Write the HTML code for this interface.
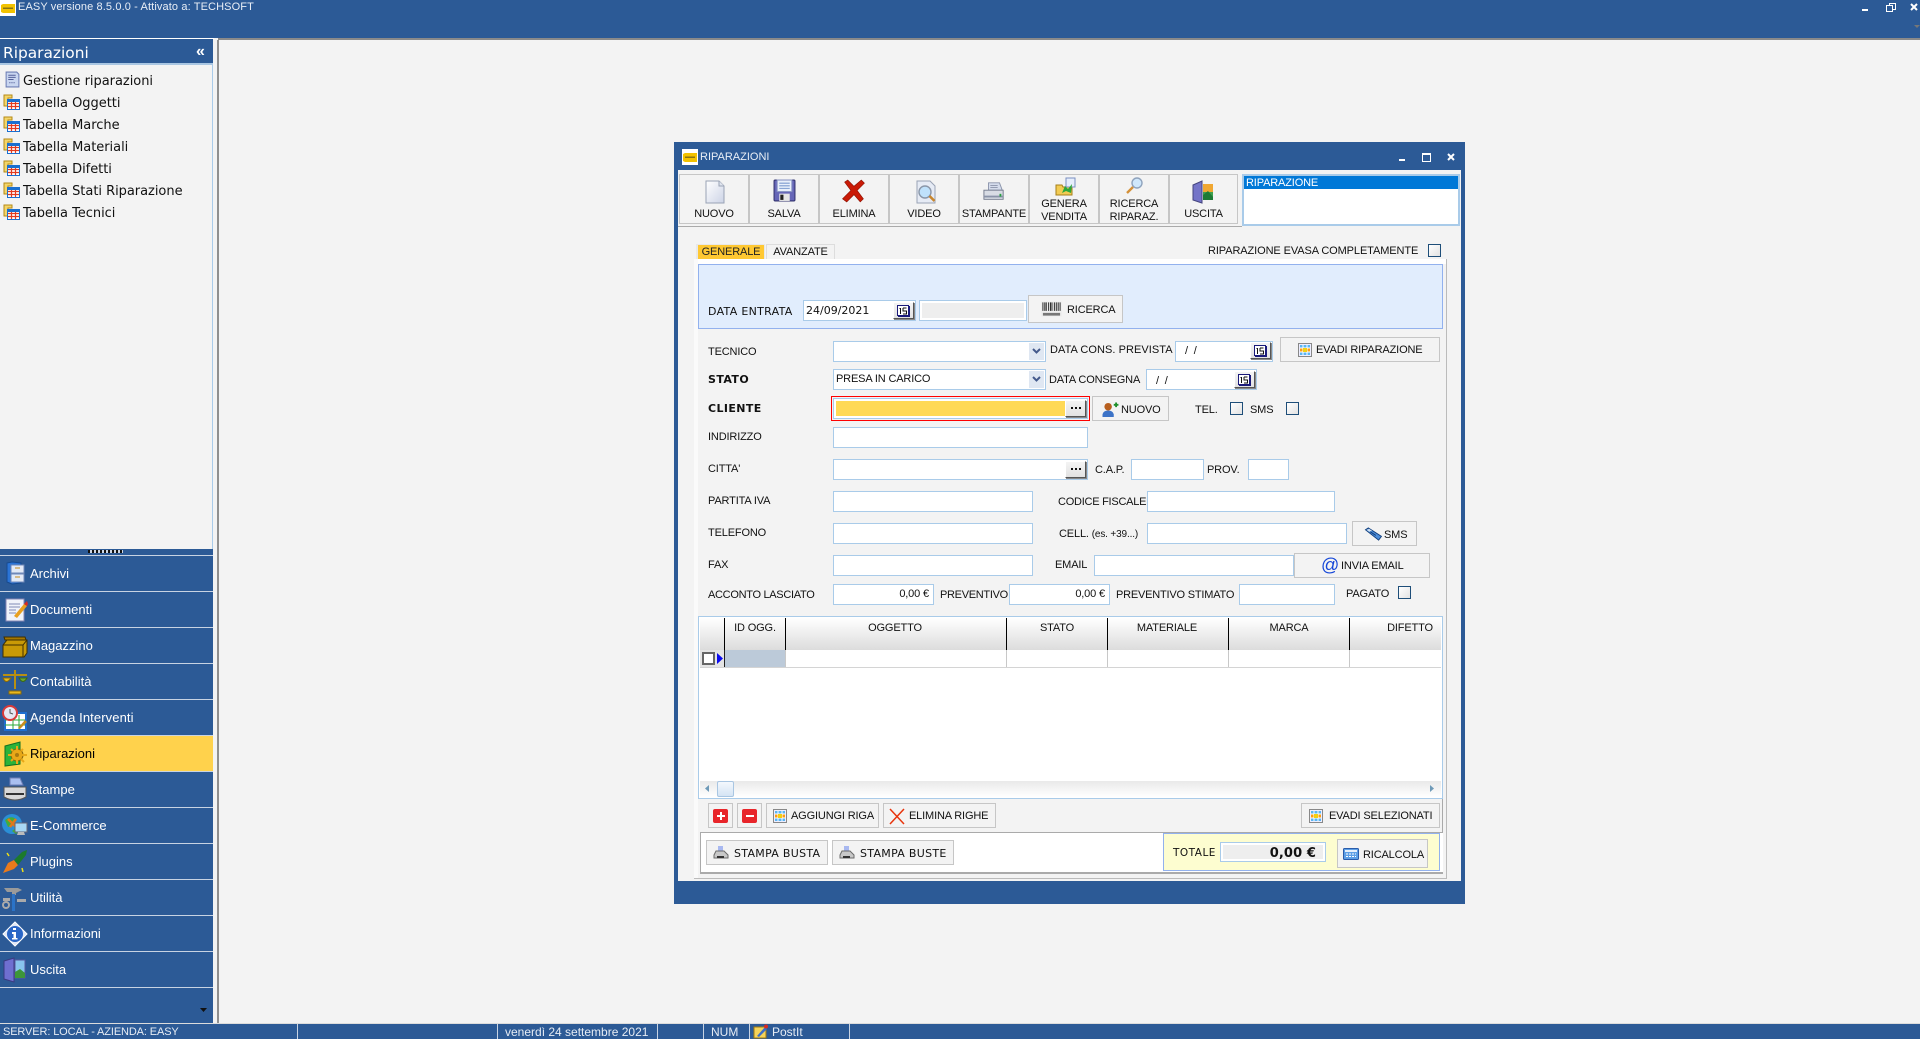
<!DOCTYPE html>
<html lang="it"><head><meta charset="utf-8"><title>EASY</title>
<style>
html,body{margin:0;padding:0;width:1920px;height:1039px;overflow:hidden;background:#f3f3f3;font-family:"Liberation Sans",sans-serif;font-size:11px;letter-spacing:-.15px;color:#111}
div,span,svg{position:absolute;box-sizing:border-box}
.t{white-space:nowrap;line-height:14px;height:14px;margin-top:1px}
.bl{font-family:"DejaVu Sans",sans-serif;font-weight:700;font-size:11px;letter-spacing:.4px}
.dj{font-family:"DejaVu Sans",sans-serif;font-size:11px;letter-spacing:.3px}
.i{background:#fff;border:1px solid #a9cbe9}
.b{background:#f3f3f3;border:1px solid #c6c6c6}
.tb{background:#f3f3f3;border:1px solid #c6c6c6;top:174px;height:50px;text-align:center;line-height:13px}
.tb span{left:0;right:0;text-align:center}
.cb{width:13px;height:13px;border:1px solid #1e4e79;background:linear-gradient(135deg,#fff,#e2e2e2)}
.m{left:0;width:213px;height:36px;border-top:1px solid #c8d3e3;background:#2c5a96;color:#fff;font-size:13px;letter-spacing:0}
.m span{left:30px;top:10px;white-space:nowrap;line-height:15px}
.m svg{left:2px;top:5px;width:26px;height:26px}
.s{font-family:"DejaVu Sans",sans-serif;font-size:13px;letter-spacing:-.03px;left:23px;white-space:nowrap;line-height:15px;color:#111;margin-top:1px}
.sb{top:1024px;height:15px;width:1px;background:#c8d3e3}
.st{top:1025px;color:#e6ecf4;font-size:12px;letter-spacing:0;line-height:14px;white-space:nowrap}
.h{top:621px;line-height:14px;white-space:nowrap;transform:translateX(-50%)}
.d{top:618px;width:1px;height:32px;background:#000}
.d2{top:650px;width:1px;height:17px;background:#c8c8c8}
.bt{background:linear-gradient(#f4f4f4,#e2e2e2);border:1px solid;border-color:#fff #555 #555 #fff;box-shadow:1px 1px 0 #888}
</style></head>
<body>
<svg width="0" height="0" style="position:absolute">
<defs>
<linearGradient id="gd" x1="0" y1="0" x2="1" y2="1"><stop offset="0" stop-color="#fff"/><stop offset="1" stop-color="#ccd3e6"/></linearGradient>
<symbol id="logo" viewBox="0 0 16 16"><rect width="16" height="16" fill="#fff"/><path d="M1 5l2-1h12v9H3l-2-1z" fill="#f2c200"/><rect x="3" y="7.500" width="10" height="1.500" fill="#8a7410"/></symbol>
<symbol id="doc" viewBox="0 0 16 16"><path d="M2 1h10l2 2v12H2z" fill="#c9d6f0" stroke="#6f7fb5"/><path d="M4 4h7M4 6h7M4 8h5" stroke="#55619a"/><path d="M5 11h1M7 11h1M9 11h1" stroke="#55619a"/></symbol>
<symbol id="tab" viewBox="0 0 17 17"><path d="M1 1h8v3H5v8H1z" fill="#f3d56a" stroke="#b68a16"/><rect x="4" y="5" width="13" height="11" fill="#1a6fd0"/><path d="M5 8h11v7H5z" fill="#fff"/><path d="M5 9.500h11M5 12.500h11M8.500 8v7M12.500 8v7" stroke="#e33a1f" stroke-width="1.200"/></symbol>
<symbol id="nuovo" viewBox="0 0 22 24"><path d="M2 1h13l5 5v17H2z" fill="url(#gd)" stroke="#9aa3b5"/><path d="M15 1v5h5" fill="#dfe4ee" stroke="#9aa3b5"/></symbol>
<symbol id="salva" viewBox="0 0 22 22"><rect x="1" y="1" width="20" height="20" rx="1" fill="#6666b8" stroke="#33336e"/><rect x="4" y="1" width="14" height="11" fill="#e9f0fb" stroke="#8a96c5"/><path d="M6 4h10M6 6.500h10M6 9h10" stroke="#7d9bd0"/><rect x="6" y="14" width="10" height="7" fill="#e6e6e6"/><rect x="7" y="15" width="3" height="5" fill="#222"/></symbol>
<symbol id="xx" viewBox="0 0 24 24"><path d="M3 3l3-2 6 6 7-6 3 3-7 7 6 8-3 3-6-7-7 7-4-3 8-8z" fill="#c91a06" stroke="#8b1000" stroke-width=".6"/></symbol>
<symbol id="video" viewBox="0 0 22 24"><path d="M2 1h13l5 5v17H2z" fill="#e6ebf5" stroke="#9aa3b5"/><circle cx="10" cy="12" r="6" fill="#bfe1fb" stroke="#8a96a8" stroke-width="1.400"/><path d="M14.500 16l5 5" stroke="#c8862e" stroke-width="2.600"/></symbol>
<symbol id="stamp" viewBox="0 0 24 24"><path d="M6 2h12l3 8H6z" fill="#d5dcec" stroke="#8a93aa"/><path d="M1 10h21v10H1z" fill="#d8dce4" stroke="#70778a"/><path d="M1 16h21v2H1z" fill="#8a93a8"/><rect x="18" y="14" width="2" height="3" fill="#28a040"/><path d="M8 5h8M8 7h8" stroke="#8a93aa"/></symbol>
<symbol id="genera" viewBox="0 0 22 20"><path d="M1 8h6l1 2h9v8H1z" fill="#f2cb52" stroke="#a67f1a"/><rect x="11" y="1" width="9" height="9" fill="#e6eefc" stroke="#7a8fc0"/><path d="M7 16l3-7 3 3 4-5-1 9-5-2z" fill="#2da83a"/></symbol>
<symbol id="ric" viewBox="0 0 18 18"><circle cx="11" cy="6" r="5" fill="#cfe7fb" stroke="#8fa3bd" stroke-width="1.400"/><path d="M7 10l-6 6" stroke="#d49038" stroke-width="2.400"/></symbol>
<symbol id="usc" viewBox="0 0 22 24"><path d="M1 5l9-4v22l-9-3z" fill="#7474c8" stroke="#44447e"/><rect x="11" y="4" width="10" height="16" fill="#3ea14e"/><rect x="11" y="4" width="10" height="8" fill="#f0a732"/><path d="M11 15l5-4 5 6v3H11z" fill="#1e7a34"/></symbol>
<symbol id="cal" viewBox="0 0 14 12"><rect x=".5" y=".5" width="11" height="10" fill="#fff" stroke="#1a1a7a"/><path d="M12 1v11H1" stroke="#1a1a7a" stroke-width="2" fill="none"/><path d="M3.500 3v6M2.500 3.500h1M6 3h3.500M6 3v3h3.500v3H6" stroke="#111" fill="none"/></symbol>
<symbol id="grid" viewBox="0 0 14 14"><rect x=".5" y=".5" width="13" height="13" fill="#eef" stroke="#888"/><rect x="2" y="2" width="10" height="10" fill="#5ab4f4"/><path d="M2 5h10v4H2z" fill="#fc9c14"/><path d="M2 5h10M2 9h10M5 2v10M9 2v10" stroke="#fff"/><path d="M5 5h4v4H5z" fill="#f2d014"/></symbol>
<symbol id="bar" viewBox="0 0 22 16"><rect width="22" height="16" fill="#eee"/><path d="M2 1v9M4 1v9M5.500 1v9M8 1v9M10 1v9M11.500 1v9M14 1v9M16 1v9M18 1v9M20 1v9" stroke="#222"/><path d="M2 12h18v3H2z" fill="#777"/></symbol>
<symbol id="pers" viewBox="0 0 18 16"><circle cx="7" cy="5" r="4" fill="#b75f1f"/><path d="M1 16v-3q1-4 6-4t6 4v3z" fill="#3d73c7"/><path d="M13 3h5M15.500 .5v5" stroke="#1f8f2c" stroke-width="2"/></symbol>
<symbol id="phone" viewBox="0 0 20 16"><path d="M2 3l3-2 14 9-3 4z" fill="#4c8cd8" stroke="#123f7d"/><path d="M3 3l3-1 3 2-3 1z" fill="#cfe0f2"/><path d="M7 5l6 4" stroke="#123f7d"/></symbol>
<symbol id="prn" viewBox="0 0 16 16"><path d="M5 1h5v6H5z" fill="#a8b8f0"/><path d="M3 6h8l4 4v3H1v-3z" fill="#c8c8c8" stroke="#6a6a6a"/><path d="M4 12h7" stroke="#333" stroke-width="2"/></symbol>
<symbol id="calc" viewBox="0 0 16 12"><rect x=".5" y=".5" width="15" height="11" rx="1" fill="#5d9fe6" stroke="#2a5caa"/><rect x="2" y="2" width="12" height="2" fill="#e7f0fb"/><path d="M3 6h2M6 6h2M9 6h2M12 6h1M3 8.500h2M6 8.500h2M9 8.500h2M12 8.500h1" stroke="#fff"/></symbol>
<symbol id="dots" viewBox="0 0 19 15"><path d="M5 6h2v2H5zM9 6h2v2H9zM13 6h2v2h-2z" fill="#111"/></symbol>
<symbol id="a" viewBox="0 0 26 26"><path d="M5 2l5-1 9 1v20l-9 1-5-2z" fill="#2b74d6" stroke="#174a90"/><rect x="9" y="4" width="13" height="8" fill="#e3eaf7" stroke="#6f88b8"/><rect x="9" y="13" width="13" height="8" fill="#e3eaf7" stroke="#6f88b8"/><path d="M13 16h5M13 7h5" stroke="#c98c1e"/></symbol>
<symbol id="b" viewBox="0 0 26 26"><rect x="4" y="2" width="18" height="22" fill="#f0f3fa" stroke="#8484b4"/><path d="M7 7h11M7 10h11M7 13h7M7 16h7" stroke="#7f8bb5"/><path d="M12 19l10-12 3 2-10 12z" fill="#e8a020"/><path d="M22 7l3-3 1 3-1 2z" fill="#d92a20"/></symbol>
<symbol id="c" viewBox="0 0 26 26"><path d="M1 12l4-5h20v13l-3 4H1z" fill="#c99a06" stroke="#3f2f00"/><path d="M2 4h21l1 3H3z" fill="#a57700" stroke="#3f2f00"/><path d="M21 24V12l4-5M1 12h20" stroke="#3f2f00" fill="none"/></symbol>
<symbol id="d1" viewBox="0 0 26 26"><path d="M13 1v19M1 6h24" stroke="#b88f12" stroke-width="2"/><path d="M1 9q3 7 8 0z" fill="#e8b81f" stroke="#8a6a08"/><path d="M17 9q4 7 8 0z" fill="#6ca832" stroke="#3a6a12"/><path d="M7 22h12v3H7z" fill="#e8b81f" stroke="#8a6a08"/></symbol>
<symbol id="e" viewBox="0 0 26 26"><rect x="3" y="8" width="21" height="17" fill="#fff" stroke="#1f6fd0" stroke-width="2"/><path d="M3 15h20M3 20h20M11 10v14M17 10v14" stroke="#2da83a"/><circle cx="8" cy="8" r="7" fill="#e6e6f2" stroke="#d83a3a" stroke-width="2"/><path d="M8 4v4l3 1" stroke="#555" fill="none"/><path d="M16 23l7-8 2 2-7 7z" fill="#c98c1e"/></symbol>
<symbol id="f" viewBox="0 0 26 26"><path d="M3 5l15-4v22l-15 2z" fill="#2bb33a" stroke="#127021"/><path d="M18 1v22" stroke="#127021"/><circle cx="15" cy="14" r="6" fill="#e8a818" stroke="#8a6408"/><circle cx="15" cy="14" r="2" fill="#a87a10"/><path d="M15 5v4M15 19v4M6 14h4M20 14h5M9 8l2 2M19 18l3 3M21 8l-2 2M9 20l2-2" stroke="#e8a818" stroke-width="2"/></symbol>
<symbol id="g" viewBox="0 0 26 26"><path d="M8 1h10l3 7H8z" fill="#a9bff0" stroke="#6f7fb5"/><path d="M2 10h22v10q-11 6-22 0z" fill="#d8d8d8" stroke="#555"/><path d="M4 17h18" stroke="#333" stroke-width="2"/></symbol>
<symbol id="h1" viewBox="0 0 26 26"><circle cx="10" cy="11" r="10" fill="#2b8fd6"/><path d="M3 7q6-5 11-1l-3 6-5 2zM10 18l4-3 3 3-3 3z" fill="#42ad3a"/><path d="M6 6l8 8M14 6l-6 8" stroke="#e0781c" stroke-width="2.500"/><rect x="13" y="10" width="12" height="9" fill="#a8d8f5" stroke="#667"/><path d="M16 19h6l1 3h-8z" fill="#bbb"/></symbol>
<symbol id="i1" viewBox="0 0 26 26"><path d="M1 24L6 14l6-3 4 5-4 4z" fill="#ea7a1c"/><path d="M12 11l8-8 5-2-1 5-8 10z" fill="#1c7a2c"/><path d="M5 4l2 3M20 19l1 4" stroke="#efe015" stroke-width="1.500"/></symbol>
<symbol id="j" viewBox="0 0 26 26"><path d="M2 3h14l4 2-6 3v2h-4V7H5z" fill="#9a9a9a"/><rect x="10" y="9" width="3" height="17" fill="#2b73c7"/><path d="M1 13h7v3H1zM15 14h9v3h-9z" fill="#aaa"/><circle cx="4" cy="20" r="3" fill="none" stroke="#aaa" stroke-width="2"/></symbol>
<symbol id="k" viewBox="0 0 26 26"><path d="M13 1l12 12-12 12L1 13z" fill="#dfe6f5" stroke="#fff"/><circle cx="13" cy="13" r="8" fill="#2a66c6"/><path d="M11 7h3v2h-3zM10 11h4v6h1.500v1.500h-5.500V17h1.500v-4H10z" fill="#fff"/></symbol>
<symbol id="l" viewBox="0 0 26 26"><path d="M2 4l10-3v24l-10-3z" fill="#6f6fd0" stroke="#3a3a80"/><rect x="13" y="3" width="10" height="18" fill="#88c4ee" stroke="#5858a0"/><path d="M13 15l5-3 5 4v5H13z" fill="#3d963a"/></symbol>
</defs>
</svg>

<!-- top bar -->
<div style="left:0;top:0;width:1920px;height:38px;background:#2c5a96"></div>
<div style="left:0;top:38px;width:214px;height:1px;background:#fff"></div>
<div style="left:218px;top:38px;width:1702px;height:2px;background:#8a8a8a"></div>
<svg style="left:0;top:0" width="16" height="16"><use href="#logo"/></svg>
<div class="t" style="left:18px;top:0;color:#e8eef6;font-size:11px;letter-spacing:.12px;margin-top:0">EASY versione 8.5.0.0 - Attivato a: TECHSOFT</div>
<div style="left:1862px;top:9px;width:6px;height:2px;background:#fff"></div>
<div style="left:1889px;top:3px;width:7px;height:7px;border:1px solid #fff"></div>
<div style="left:1886px;top:5px;width:7px;height:7px;border:1.500px solid #fff;background:#2c5a96"></div>
<svg style="left:1910px;top:3px" width="8" height="8"><path d="M1 1l6 6M7 1l-6 6" stroke="#fff" stroke-width="2"/></svg>
<svg style="left:1914px;top:25px" width="6" height="4"><path d="M0 0h6l-3 3z" fill="#777"/></svg>

<!-- sidebar -->
<div style="left:0;top:39px;width:213px;height:26px;background:#2c5a96;border-bottom:2px solid #a9c6e2"></div>
<div style="left:3px;top:44px;color:#fff;font-family:'DejaVu Sans',sans-serif;font-size:15.400px;letter-spacing:0;line-height:18px;white-space:nowrap">Riparazioni</div>
<div style="left:196px;top:43px;color:#fff;font-size:16px;line-height:18px;font-weight:700">«</div>
<div style="left:212px;top:65px;width:1px;height:484px;background:#a9cbe9"></div>
<svg style="left:4px;top:71px" width="17" height="17"><use href="#doc"/></svg>
<div class="s" style="top:73px">Gestione riparazioni</div>
<svg style="left:3px;top:94px" width="17" height="17"><use href="#tab"/></svg><div class="s" style="top:95px">Tabella Oggetti</div>
<svg style="left:3px;top:116px" width="17" height="17"><use href="#tab"/></svg><div class="s" style="top:117px">Tabella Marche</div>
<svg style="left:3px;top:138px" width="17" height="17"><use href="#tab"/></svg><div class="s" style="top:139px">Tabella Materiali</div>
<svg style="left:3px;top:160px" width="17" height="17"><use href="#tab"/></svg><div class="s" style="top:161px">Tabella Difetti</div>
<svg style="left:3px;top:182px" width="17" height="17"><use href="#tab"/></svg><div class="s" style="top:183px">Tabella Stati Riparazione</div>
<svg style="left:3px;top:204px" width="17" height="17"><use href="#tab"/></svg><div class="s" style="top:205px">Tabella Tecnici</div>

<div style="left:0;top:549px;width:213px;height:6px;background:#2c5a96"></div>
<div style="left:88px;top:550px;width:35px;height:3px;background:repeating-linear-gradient(90deg,#111 0 2px,#cfd8e6 2px 4px)"></div>
<div class="m" style="top:555px"><svg><use href="#a"/></svg><span>Archivi</span></div>
<div class="m" style="top:591px"><svg><use href="#b"/></svg><span>Documenti</span></div>
<div class="m" style="top:627px"><svg><use href="#c"/></svg><span>Magazzino</span></div>
<div class="m" style="top:663px"><svg><use href="#d1"/></svg><span>Contabilità</span></div>
<div class="m" style="top:699px"><svg><use href="#e"/></svg><span style="letter-spacing:.1px">Agenda Interventi</span></div>
<div class="m" style="top:735px;background:#ffd24c;color:#000"><svg><use href="#f"/></svg><span>Riparazioni</span></div>
<div class="m" style="top:771px"><svg><use href="#g"/></svg><span>Stampe</span></div>
<div class="m" style="top:807px"><svg><use href="#h1"/></svg><span>E-Commerce</span></div>
<div class="m" style="top:843px"><svg><use href="#i1"/></svg><span>Plugins</span></div>
<div class="m" style="top:879px"><svg><use href="#j"/></svg><span>Utilità</span></div>
<div class="m" style="top:915px"><svg><use href="#k"/></svg><span>Informazioni</span></div>
<div class="m" style="top:951px"><svg><use href="#l"/></svg><span>Uscita</span></div>
<div class="m" style="top:987px;height:36px"></div>
<svg style="left:200px;top:1008px" width="8" height="5"><path d="M0 0h7l-3.500 4z" fill="#111"/></svg>

<div style="left:217px;top:40px;width:2px;height:983px;background:#8f8f8f"></div>

<!-- status bar -->
<div style="left:0;top:1023px;width:1920px;height:1px;background:#dcdcdc"></div>
<div style="left:0;top:1024px;width:1920px;height:15px;background:#2c5a96"></div>
<div class="st" style="left:3px;font-size:11px;letter-spacing:-.12px">SERVER: LOCAL - AZIENDA: EASY</div>
<div class="sb" style="left:297px"></div><div class="sb" style="left:497px"></div>
<div class="st" style="left:505px">venerdì 24 settembre 2021</div>
<div class="sb" style="left:657px"></div><div class="sb" style="left:703px"></div>
<div class="st" style="left:711px">NUM</div>
<div class="sb" style="left:749px"></div>
<svg style="left:753px;top:1024px" width="15" height="15" viewBox="0 0 15 15"><rect x="1" y="3" width="12" height="11" fill="#f4d35a" stroke="#a07a10"/><path d="M4 12l8-9 2 2-8 8z" fill="#3d6fc7"/><circle cx="13" cy="2.500" r="2" fill="#d82a20"/></svg>
<div class="st" style="left:772px">PostIt</div>
<div class="sb" style="left:849px"></div>

<!-- window -->
<div style="left:674px;top:142px;width:791px;height:762px;background:#2c5a96"></div>
<div style="left:678px;top:170px;width:783px;height:711px;background:#f3f3f3"></div>
<svg style="left:682px;top:149px" width="16" height="16"><use href="#logo"/></svg>
<div class="t" style="left:700px;top:149px;color:#e8eef6;font-size:11px;letter-spacing:0">RIPARAZIONI</div>
<div style="left:1399px;top:159px;width:6px;height:2px;background:#fff"></div>
<div style="left:1422px;top:153px;width:9px;height:9px;border:1.500px solid #fff;border-top-width:2px"></div>
<svg style="left:1447px;top:153px" width="8" height="8"><path d="M1 1l6 6M7 1l-6 6" stroke="#fff" stroke-width="2"/></svg>

<!-- toolbar -->
<div class="tb" style="left:679px;width:70px"><svg style="left:24px;top:5px" width="22" height="24"><use href="#nuovo"/></svg><span style="top:33px">NUOVO</span></div>
<div class="tb" style="left:749px;width:70px"><svg style="left:23px;top:4px" width="23" height="23"><use href="#salva"/></svg><span style="top:33px">SALVA</span></div>
<div class="tb" style="left:819px;width:70px"><svg style="left:21px;top:4px" width="26" height="25"><use href="#xx"/></svg><span style="top:33px">ELIMINA</span></div>
<div class="tb" style="left:889px;width:70px"><svg style="left:25px;top:5px" width="22" height="24"><use href="#video"/></svg><span style="top:33px">VIDEO</span></div>
<div class="tb" style="left:959px;width:70px"><svg style="left:22px;top:6px" width="24" height="22"><use href="#stamp"/></svg><span style="top:33px">STAMPANTE</span></div>
<div class="tb" style="left:1029px;width:70px"><svg style="left:25px;top:2px" width="22" height="20"><use href="#genera"/></svg><span style="top:23px">GENERA</span><span style="top:36px">VENDITA</span></div>
<div class="tb" style="left:1099px;width:70px"><svg style="left:26px;top:2px" width="18" height="18"><use href="#ric"/></svg><span style="top:23px">RICERCA</span><span style="top:36px">RIPARAZ.</span></div>
<div class="tb" style="left:1169px;width:69px"><svg style="left:22px;top:5px" width="22" height="24"><use href="#usc"/></svg><span style="top:33px">USCITA</span></div>
<div style="left:678px;top:226px;width:564px;height:1px;background:#aaa"></div>
<div style="left:1242px;top:174px;width:218px;height:52px;background:#fff;border:2px solid #a9cbe9"></div>
<div style="left:1244px;top:176px;width:214px;height:13px;background:#0078d7;color:#fff;padding-left:2px;line-height:15px;white-space:nowrap;overflow:hidden">RIPARAZIONE</div>

<!-- tabs -->
<div style="left:696px;top:244px;width:69px;height:15px;background:#e8e8e8"></div>
<div style="left:698px;top:245px;width:66px;height:14px;background:#ffc832;text-align:center;line-height:15px;color:#222">GENERALE</div>
<div style="left:766px;top:244px;width:69px;height:15px;background:#f3f3f3;border:1px solid #ddd;border-bottom:0;text-align:center;line-height:15px">AVANZATE</div>
<div class="t" style="left:1208px;top:243px;letter-spacing:-.1px">RIPARAZIONE EVASA COMPLETAMENTE</div>
<div class="cb" style="left:1428px;top:244px"></div>

<!-- page panel -->
<div style="left:694px;top:259px;width:753px;height:620px;background:#f3f3f3;border-right:1px solid #bbb;border-bottom:1px solid #bbb"></div>
<div style="left:694px;top:259px;width:752px;height:5px;background:#fff"></div>
<div style="left:694px;top:259px;width:4px;height:619px;background:#fafafa"></div>

<div style="left:698px;top:264px;width:745px;height:65px;background:#e1edfd;border:1px solid #92b1ee"></div>
<div class="t dj" style="left:708px;top:304px">DATA ENTRATA</div>
<div class="i" style="left:803px;top:300px;width:113px;height:21px"></div>
<div class="t dj" style="left:806px;top:303px;letter-spacing:0">24/09/2021</div>
<div class="bt" style="left:893px;top:302px;width:21px;height:17px"><svg style="left:3px;top:2px" width="14" height="12"><use href="#cal"/></svg></div>
<div class="i" style="left:919px;top:300px;width:108px;height:21px;padding:2px"><div style="left:2px;top:2px;right:2px;bottom:2px;background:#eee"></div></div>
<div class="b" style="left:1028px;top:295px;width:95px;height:28px"><svg style="left:12px;top:5px" width="21" height="16"><use href="#bar"/></svg><span class="t" style="left:38px;top:6px">RICERCA</span></div>

<!-- form -->
<div class="t" style="left:708px;top:344px">TECNICO</div>
<div class="i" style="left:833px;top:341px;width:213px;height:21px"><div style="right:1px;top:1px;width:15px;height:17px;background:#dfe7f2"><svg style="left:3px;top:5px" width="9" height="7"><path d="M1 1l3.500 3.500L8 1" stroke="#445a8c" stroke-width="2" fill="none"/></svg></div></div>
<div class="t" style="left:1050px;top:342px;letter-spacing:.05px">DATA CONS. PREVISTA</div>
<div class="i" style="left:1175px;top:341px;width:98px;height:21px"></div>
<div class="t" style="left:1185px;top:343px">/&nbsp; /</div>
<div class="bt" style="left:1250px;top:342px;width:21px;height:17px"><svg style="left:3px;top:2px" width="14" height="12"><use href="#cal"/></svg></div>
<div class="b" style="left:1280px;top:337px;width:160px;height:25px"><svg style="left:17px;top:5px" width="14" height="14"><use href="#grid"/></svg><span class="t" style="left:35px;top:4px">EVADI RIPARAZIONE</span></div>

<div class="t bl" style="left:708px;top:372px">STATO</div>
<div class="i" style="left:833px;top:369px;width:213px;height:21px"><span class="t" style="left:2px;top:1px">PRESA IN CARICO</span><div style="right:1px;top:1px;width:15px;height:17px;background:#dfe7f2"><svg style="left:3px;top:5px" width="9" height="7"><path d="M1 1l3.500 3.500L8 1" stroke="#445a8c" stroke-width="2" fill="none"/></svg></div></div>
<div class="t" style="left:1049px;top:372px">DATA CONSEGNA</div>
<div class="i" style="left:1146px;top:369px;width:111px;height:21px"></div>
<div class="t" style="left:1156px;top:373px">/&nbsp; /</div>
<div class="bt" style="left:1234px;top:371px;width:21px;height:17px"><svg style="left:3px;top:2px" width="14" height="12"><use href="#cal"/></svg></div>

<div class="t bl" style="left:708px;top:401px">CLIENTE</div>
<div style="left:831px;top:396px;width:259px;height:25px;border:1px solid #f00"></div>
<div class="i" style="left:833px;top:398px;width:255px;height:21px"></div>
<div style="left:836px;top:401px;width:229px;height:15px;background:#ffd955"></div>
<div class="bt" style="left:1065px;top:400px;width:21px;height:17px"><svg style="left:0;top:0" width="19" height="15"><use href="#dots"/></svg></div>
<div class="b" style="left:1092px;top:396px;width:77px;height:25px"><svg style="left:8px;top:5px" width="18" height="15"><use href="#pers"/></svg><span class="t" style="left:28px;top:5px">NUOVO</span></div>
<div class="t" style="left:1195px;top:402px">TEL.</div>
<div class="cb" style="left:1230px;top:402px"></div>
<div class="t" style="left:1250px;top:402px">SMS</div>
<div class="cb" style="left:1286px;top:402px"></div>

<div class="t" style="left:708px;top:429px">INDIRIZZO</div>
<div class="i" style="left:833px;top:427px;width:255px;height:21px"></div>

<div class="t" style="left:708px;top:461px">CITTA'</div>
<div class="i" style="left:833px;top:459px;width:255px;height:21px"></div>
<div class="bt" style="left:1065px;top:461px;width:21px;height:17px"><svg style="left:0;top:0" width="19" height="15"><use href="#dots"/></svg></div>
<div class="t" style="left:1095px;top:462px">C.A.P.</div>
<div class="i" style="left:1131px;top:459px;width:73px;height:21px"></div>
<div class="t" style="left:1207px;top:462px">PROV.</div>
<div class="i" style="left:1248px;top:459px;width:41px;height:21px"></div>

<div class="t" style="left:708px;top:493px">PARTITA IVA</div>
<div class="i" style="left:833px;top:491px;width:200px;height:21px"></div>
<div class="t" style="left:1058px;top:494px;letter-spacing:-.25px">CODICE FISCALE</div>
<div class="i" style="left:1147px;top:491px;width:188px;height:21px"></div>

<div class="t" style="left:708px;top:525px">TELEFONO</div>
<div class="i" style="left:833px;top:523px;width:200px;height:21px"></div>
<div class="t" style="left:1059px;top:526px">CELL. <span style="position:static;font-size:10px">(es. +39...)</span></div>
<div class="i" style="left:1147px;top:523px;width:200px;height:21px"></div>
<div class="b" style="left:1352px;top:521px;width:65px;height:25px"><svg style="left:10px;top:5px" width="20" height="15"><use href="#phone"/></svg><span class="t" style="left:31px;top:5px">SMS</span></div>

<div class="t" style="left:708px;top:557px">FAX</div>
<div class="i" style="left:833px;top:555px;width:200px;height:21px"></div>
<div class="t" style="left:1055px;top:557px">EMAIL</div>
<div class="i" style="left:1094px;top:555px;width:200px;height:21px"></div>
<div class="b" style="left:1294px;top:553px;width:136px;height:25px"><span style="left:26px;top:1px;font-size:18px;line-height:21px;color:#1446d8">@</span><span class="t" style="left:46px;top:4px">INVIA EMAIL</span></div>

<div class="t" style="left:708px;top:587px;letter-spacing:-.3px">ACCONTO LASCIATO</div>
<div class="i" style="left:833px;top:584px;width:101px;height:21px;text-align:right;padding-right:4px;line-height:19px">0,00 €</div>
<div class="t" style="left:940px;top:587px;letter-spacing:-.3px">PREVENTIVO</div>
<div class="i" style="left:1009px;top:584px;width:101px;height:21px;text-align:right;padding-right:4px;line-height:19px">0,00 €</div>
<div class="t" style="left:1116px;top:587px;letter-spacing:-.2px">PREVENTIVO STIMATO</div>
<div class="i" style="left:1239px;top:584px;width:96px;height:21px"></div>
<div class="t" style="left:1346px;top:586px">PAGATO</div>
<div class="cb" style="left:1398px;top:586px"></div>

<!-- grid -->
<div style="left:698px;top:616px;width:745px;height:183px;background:#fff;border:1px solid #a9cbe9"></div>
<div style="left:700px;top:618px;width:741px;height:32px;background:linear-gradient(#fff,#dcdcdc)"></div>
<div style="left:700px;top:650px;width:24px;height:17px;background:#e4e4e4"></div>
<div style="left:725px;top:650px;width:60px;height:17px;background:#bccad9"></div>
<div style="left:700px;top:667px;width:741px;height:1px;background:#d4d4d4"></div>
<div class="d" style="left:724px"></div><div class="d" style="left:785px"></div><div class="d" style="left:1006px"></div><div class="d" style="left:1107px"></div><div class="d" style="left:1228px"></div><div class="d" style="left:1349px"></div>
<div class="d2" style="left:724px;background:#222"></div><div class="d2" style="left:785px"></div><div class="d2" style="left:1006px"></div><div class="d2" style="left:1107px"></div><div class="d2" style="left:1228px"></div><div class="d2" style="left:1349px"></div>
<div class="h" style="left:755px">ID OGG.</div><div class="h" style="left:895px">OGGETTO</div><div class="h" style="left:1057px">STATO</div><div class="h" style="left:1167px">MATERIALE</div><div class="h" style="left:1289px">MARCA</div><div class="h" style="left:1410px">DIFETTO</div>
<div style="left:702px;top:652px;width:13px;height:13px;border:2px solid #666;background:#fff"></div>
<svg style="left:717px;top:652px" width="7" height="13"><path d="M0 1l6 5.500L0 12z" fill="#0a0af0"/></svg>
<div style="left:700px;top:781px;width:741px;height:16px;background:linear-gradient(#e9e9e9,#fff)"></div>
<div style="left:717px;top:781px;width:17px;height:16px;background:linear-gradient(#f4f8fd,#d4e4f4);border:1px solid #a9c6e2;border-radius:2px"></div>
<svg style="left:705px;top:785px" width="5" height="8"><path d="M4 0v7L0 3.500z" fill="#6e9ab8"/></svg>
<svg style="left:1430px;top:785px" width="5" height="8"><path d="M0 0v7l4-3.500z" fill="#6e9ab8"/></svg>

<!-- grid buttons -->
<div style="left:1442px;top:799px;width:1px;height:74px;background:#aaa"></div>
<div class="b" style="left:708px;top:803px;width:25px;height:25px"><div style="left:4px;top:5px;width:15px;height:14px;background:#e8252a;border-radius:2px"></div><svg style="left:6px;top:6px" width="12" height="12"><path d="M6 2v8M2 6h8" stroke="#fff" stroke-width="2"/></svg></div>
<div class="b" style="left:737px;top:803px;width:25px;height:25px"><div style="left:4px;top:5px;width:15px;height:14px;background:#e8252a;border-radius:2px"></div><svg style="left:6px;top:6px" width="12" height="12"><path d="M2 6h8" stroke="#fff" stroke-width="2"/></svg></div>
<div class="b" style="left:766px;top:803px;width:113px;height:25px"><svg style="left:6px;top:5px" width="14" height="14"><use href="#grid"/></svg><span class="t" style="left:24px;top:4px">AGGIUNGI RIGA</span></div>
<div class="b" style="left:883px;top:803px;width:113px;height:25px"><svg style="left:5px;top:4px" width="16" height="17"><path d="M1 1l14 15M15 1L1 16" stroke="#e8340c" stroke-width="1.500"/></svg><span class="t" style="left:25px;top:4px">ELIMINA RIGHE</span></div>
<div class="b" style="left:1301px;top:803px;width:139px;height:25px"><svg style="left:7px;top:5px" width="14" height="14"><use href="#grid"/></svg><span class="t" style="left:27px;top:4px">EVADI SELEZIONATI</span></div>

<!-- bottom panel -->
<div style="left:700px;top:832px;width:743px;height:42px;background:#fff;border-top:1px solid #aaa;border-bottom:2px solid #aaa;border-left:1px solid #aaa"></div>
<div class="b" style="left:706px;top:840px;width:122px;height:25px"><svg style="left:6px;top:4px" width="16" height="16"><use href="#prn"/></svg><span class="t dj" style="left:27px;top:5px">STAMPA BUSTA</span></div>
<div class="b" style="left:832px;top:840px;width:122px;height:25px"><svg style="left:6px;top:4px" width="16" height="16"><use href="#prn"/></svg><span class="t dj" style="left:27px;top:5px">STAMPA BUSTE</span></div>
<div style="left:1163px;top:833px;width:277px;height:38px;background:#fdfdd0;border:1px solid #92b1ee"></div>
<div class="t dj" style="left:1173px;top:845px;font-size:10.500px;letter-spacing:.5px">TOTALE</div>
<div class="i" style="left:1220px;top:842px;width:106px;height:20px"><div style="left:2px;top:2px;right:2px;bottom:2px;background:#eee"></div></div>
<div class="t bl" style="left:1256px;top:846px;width:60px;text-align:right;font-size:13px;letter-spacing:.1px">0,00 €</div>
<div class="b" style="left:1337px;top:839px;width:91px;height:29px"><svg style="left:5px;top:8px" width="16" height="12"><use href="#calc"/></svg><span class="t" style="left:25px;top:7px">RICALCOLA</span></div>
</body></html>
